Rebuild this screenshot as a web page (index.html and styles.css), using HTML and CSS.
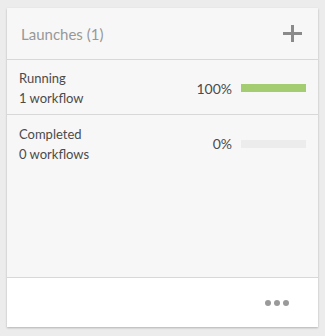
FILE: index.html
```html
<!DOCTYPE html>
<html lang="en">
<head>
  <meta charset="UTF-8" />
  <title>Launches</title>
  <link rel="stylesheet" href="styles.css">
</head>
<body>
  <div class="card">
    <header class="card-head">
      <h2>Launches (1)</h2>
      <button class="add" aria-label="Add">
        <svg width="19" height="17" viewBox="0 0 19 17"><rect x="0" y="7" width="19" height="3" fill="#8a8a8a"/><rect x="8" y="0" width="3" height="17" fill="#8a8a8a"/></svg>
      </button>
    </header>

    <div class="rows">
      <div class="row">
        <div class="label">
          <div>Running</div>
          <div>1 workflow</div>
        </div>
        <span class="pct">100%</span>
        <div class="bar"><div class="fill" style="width: 100%"></div></div>
      </div>
      <div class="row">
        <div class="label">
          <div>Completed</div>
          <div>0 workflows</div>
        </div>
        <span class="pct">0%</span>
        <div class="bar"><div class="fill" style="width: 0%"></div></div>
      </div>
    </div>

    <footer class="card-foot">
      <span class="dots"><i></i><i></i><i></i></span>
    </footer>
  </div>
</body>
</html>
```

FILE: styles.css
```css
* {
  box-sizing: border-box;
}
body {
  margin: 0;
  background: #ececec;
  font-family: Lato, 'Open Sans', sans-serif;
  padding: 8px 7px;
}

.card {
  width: 311px;
  height: 319px;
  background: #f7f7f7;
  box-shadow: 0 1px 2px rgba(0, 0, 0, 0.25);
  display: flex;
  flex-direction: column;
}

.card-head {
  height: 52px;
  display: flex;
  align-items: center;
  justify-content: space-between;
  padding: 0 16px 0 14px;
  border-bottom: 1px solid #d8d8d8;
}
.card-head h2 {
  margin: 0;
  font-size: 15px;
  font-weight: 400;
  color: #989898;
}
.add {
  background: none;
  border: none;
  padding: 0;
  display: flex;
}

.rows {
  flex: 1;
}
.row {
  height: 55px;
  display: flex;
  align-items: center;
  padding: 2px 12px 0 12px;
  border-bottom: 1px solid #d8d8d8;
  font-size: 13px;
  color: #4b4b4b;
}
.row:last-child {
  border-bottom: none;
}
.label {
  flex: 1;
  line-height: 20px;
}
.pct {
  font-size: 14px;
  margin-right: 9px;
}
.bar {
  width: 65px;
  height: 8px;
  background: #ececec;
}
.fill {
  height: 100%;
  background: #a4cd72;
}

.card-foot {
  height: 50px;
  background: #fff;
  border-top: 1px solid #d8d8d8;
  display: flex;
  align-items: center;
  justify-content: flex-end;
  padding-right: 29px;
}
.dots {
  display: flex;
  gap: 3px;
}
.dots i {
  width: 6px;
  height: 6px;
  border-radius: 50%;
  background: #9a9a9a;
}
```
